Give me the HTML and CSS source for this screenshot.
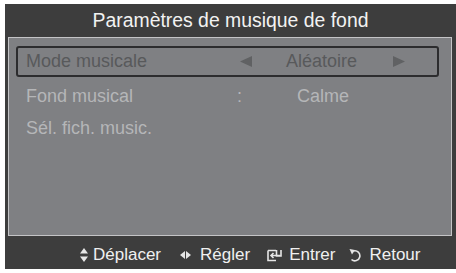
FILE: index.html
```html
<!DOCTYPE html>
<html>
<head>
<meta charset="utf-8">
<link rel="stylesheet" href="styles.css">
</head>
<body>
<div class="osd">
  <div class="title">Paramètres de musique de fond</div>
  <div class="panel">
    <div class="row sel">
      <span class="label">Mode musicale</span>
      <svg class="arrow al" width="12" height="11" viewBox="0 0 12 11"><path d="M0 5.5 L12 0 V11 Z" fill="#606163"/></svg>
      <span class="value">Aléatoire</span>
      <svg class="arrow ar" width="12" height="11" viewBox="0 0 12 11"><path d="M12 5.5 L0 0 V11 Z" fill="#606163"/></svg>
    </div>
    <div class="row">
      <span class="label">Fond musical</span>
      <span class="colon">:</span>
      <span class="value">Calme</span>
    </div>
    <div class="row">
      <span class="label">Sél. fich. music.</span>
    </div>
  </div>
  <div class="footer">
    <span class="hint h1"><svg class="ic" width="8" height="14" viewBox="0 0 8 14"><path d="M4 0 L8 5.5 H0 Z M4 14 L8 8.5 H0 Z" fill="#e6e6e6"/></svg>Déplacer</span>
    <span class="hint h2"><svg class="ic" width="11" height="8" viewBox="0 0 11 8"><path d="M0 4 L5 0 V8 Z M11 4 L6 0 V8 Z" fill="#e6e6e6"/></svg>Régler</span>
    <span class="hint h3"><svg class="ic" width="15" height="13" viewBox="0 0 15 13"><path d="M1 1.5 H9 M1 1.5 V11.5 H9" fill="none" stroke="#e6e6e6" stroke-width="1.6"/><path d="M9.5 1 V7 H14 V1 M13 6.5 H4 M6.5 4 L4 6.5 L6.5 9" fill="none" stroke="#e6e6e6" stroke-width="1.6"/></svg>Entrer</span>
    <span class="hint h4"><svg class="ic" width="13" height="14" viewBox="0 0 13 14"><path d="M4.5 3 A5 5 0 1 1 2.5 11.5" fill="none" stroke="#e6e6e6" stroke-width="1.6"/><path d="M0.5 1 L6 2 L3 6.5 Z" fill="#e6e6e6"/></svg>Retour</span>
  </div>
</div>
</body>
</html>
```

FILE: styles.css
```css
html, body {
  margin: 0;
  padding: 0;
  background: #ffffff;
}
body {
  padding: 4px 0 0 5px;
  font-family: "Liberation Sans", Arial, sans-serif;
}
.osd {
  width: 451px;
  height: 265px;
  background: #3d3d3d;
  display: flex;
  flex-direction: column;
  box-sizing: border-box;
  padding: 0 0 0 3px;
}
.title {
  height: 33px;
  line-height: 33px;
  text-align: center;
  color: #f2f2f2;
  font-size: 19.4px;
  padding-right: 3px;
}
.panel {
  width: 444px;
  height: 199px;
  box-sizing: border-box;
  background: #7f8083;
  border: 1px solid #c4c4c6;
  padding: 8px 12px 0 7px;
  display: flex;
  flex-direction: column;
}
.row {
  height: 32px;
  display: flex;
  align-items: center;
  position: relative;
  font-size: 18px;
  color: #b5b6b8;
  box-sizing: border-box;
  border: 2px solid transparent;
  border-radius: 3px;
}
.row.sel {
  height: 31px;
  border-color: #2c2c2e;
  color: #58595b;
  margin-bottom: 3px;
}
.label {
  position: absolute;
  left: 8px;
}
.arrow {
  position: absolute;
  top: 8px;
}
.al { left: 222px; }
.ar { left: 375px; }
.colon {
  position: absolute;
  left: 219px;
}
.value {
  position: absolute;
  left: 279px;
}
.row.sel .value { left: 268px; }
.footer {
  flex: 1;
  display: flex;
  align-items: center;
  padding: 5px 0 0 72px;
  color: #f0f0f0;
  font-size: 17px;
}
.hint {
  display: flex;
  align-items: center;
}
.ic {
  margin-right: 6px;
}
.h1 .ic { margin-right: 5px; }
.h2 { margin-left: 19px; }
.h2 .ic { margin-right: 9px; }
.h3 { margin-left: 17px; }
.h3 .ic { margin-right: 7px; }
.h4 { margin-left: 14px; }
.h4 .ic { margin-right: 7px; }
```
